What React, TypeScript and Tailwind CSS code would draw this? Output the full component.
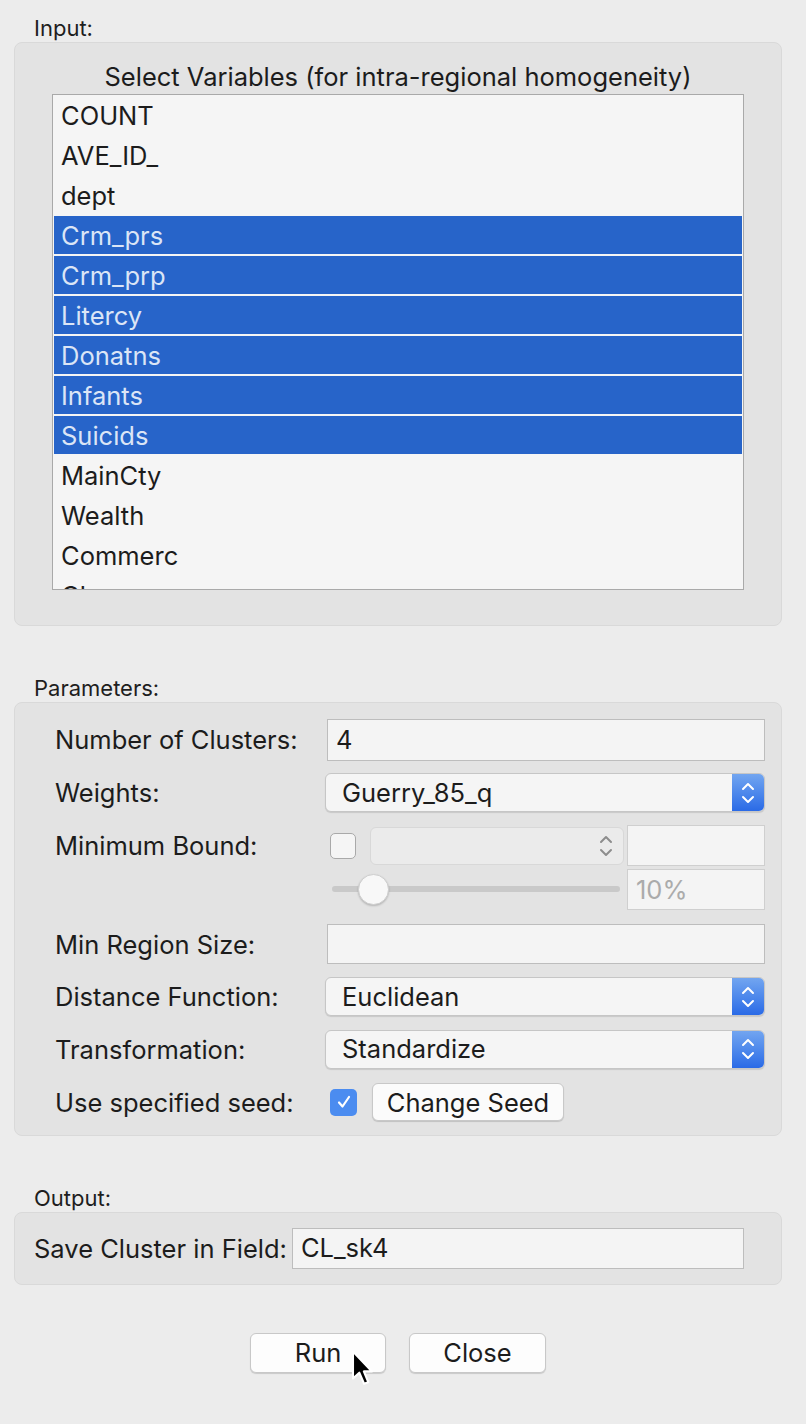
import type { ReactNode } from "react";

const variables = [
  { name: "COUNT", selected: false },
  { name: "AVE_ID_", selected: false },
  { name: "dept", selected: false },
  { name: "Crm_prs", selected: true },
  { name: "Crm_prp", selected: true },
  { name: "Litercy", selected: true },
  { name: "Donatns", selected: true },
  { name: "Infants", selected: true },
  { name: "Suicids", selected: true },
  { name: "MainCty", selected: false },
  { name: "Wealth", selected: false },
  { name: "Commerc", selected: false },
  { name: "Clergy", selected: false },
];

function SectionLabel({ children }: { children: ReactNode }) {
  return <div className="h-[26px] pl-[20px] text-[22px] leading-[26px] text-[#1e1e1e]">{children}</div>;
}

function Panel({ className, children }: { className?: string; children: ReactNode }) {
  return (
    <div className={`w-[768px] rounded-[8px] border border-[#d9d9d9] bg-[#e3e3e3] ${className ?? ""}`}>
      {children}
    </div>
  );
}

function Chevrons({ color }: { color: string }) {
  return (
    <svg width="14" height="26" viewBox="0 0 14 26" fill="none">
      <path d="M2 9 L7 4 L12 9" stroke={color} strokeWidth="2" strokeLinecap="round" strokeLinejoin="round" />
      <path d="M2 17 L7 22 L12 17" stroke={color} strokeWidth="2" strokeLinecap="round" strokeLinejoin="round" />
    </svg>
  );
}

function Select({ value }: { value: string }) {
  return (
    <div className="flex h-[39px] w-[440px] overflow-hidden rounded-[6px] border border-[#c6c6c6] bg-[#f5f5f5] shadow-[0_1px_1px_rgba(0,0,0,0.12)]">
      <div className="flex flex-1 items-center pl-[16px] text-[25.5px]">{value}</div>
      <div className="flex w-[32px] items-center justify-center bg-gradient-to-b from-[#72a5f0] to-[#2a6ae6]">
        <Chevrons color="#ffffff" />
      </div>
    </div>
  );
}

function TextBox({ value, className, muted }: { value?: string; className?: string; muted?: boolean }) {
  return (
    <div
      className={`flex items-center border border-[#bdbdbd] bg-[#f4f4f4] pl-[8px] text-[25.5px] ${muted ? "border-[#cfcfcf] text-[#ababab]" : ""} ${className ?? ""}`}
    >
      {value}
    </div>
  );
}

function Row({ label, children, className }: { label: string; children: ReactNode; className?: string }) {
  return (
    <div className={`flex items-center ${className ?? ""}`}>
      <div className="w-[270px] shrink-0 pt-[1px] text-[25.5px]">{label}</div>
      {children}
    </div>
  );
}

function Cursor() {
  return (
    <svg className="absolute left-[337px] top-[17px]" width="24" height="38" viewBox="0 0 22 36">
      <path
        d="M1.5 1.5 L1.5 27 L7.5 21.5 L12 32 L16 30.5 L11.8 20.3 L19.5 20.3 Z"
        fill="#000"
        stroke="#fff"
        strokeWidth="2"
        strokeLinejoin="round"
      />
    </svg>
  );
}

export default function App() {
  return (
    <div className="h-[1424px] w-[806px] bg-[#ececec] px-[14px] pt-[15px] font-['Inter',sans-serif] text-[#1c1c1c]">
      <SectionLabel>Input:</SectionLabel>
      <Panel className="mt-[1px] h-[584px] pt-[19px]">
        <div className="h-[30px] text-center text-[25.5px] leading-[30px]">
          Select Variables (for intra-regional homogeneity)
        </div>
        <div className="ml-[37px] mt-[2px] h-[496px] w-[692px] overflow-hidden border border-[#a9a9a9] bg-[#f5f5f5] pt-[1px]">
          {variables.map((v) => (
            <div key={v.name} className="h-[40px] px-[1px]">
              <div
                className={`flex h-[38px] items-center pl-[7px] pt-[3px] text-[25.5px] ${v.selected ? "bg-[#2764c9] text-[#dbe5f6]" : ""}`}
              >
                {v.name}
              </div>
            </div>
          ))}
        </div>
      </Panel>

      <div className="mt-[49px]">
        <SectionLabel>Parameters:</SectionLabel>
      </div>
      <Panel className="mt-[1px] h-[434px] pl-[40px] pt-[16px]">
        <Row label="Number of Clusters:">
          <TextBox value="4" className="ml-[2px] h-[42px] w-[438px]" />
        </Row>
        <Row label="Weights:" className="mt-[12px]">
          <Select value="Guerry_85_q" />
        </Row>
        <Row label="Minimum Bound:" className="mt-[13px]">
          <div className="flex items-center">
            <div className="ml-[5px] h-[26px] w-[26px] rounded-[5px] border border-[#a9a9a9] bg-[#f5f5f5]" />
            <div className="ml-[14px] flex h-[38px] w-[254px] items-center justify-end rounded-[6px] border border-[#d8d8d8] bg-[#ebebeb] pr-[10px]">
              <Chevrons color="#8d8d8d" />
            </div>
            <TextBox className="ml-[3px] h-[41px] w-[138px] border-[#cfcfcf]" />
          </div>
        </Row>
        <div className="mt-[3px] flex items-center pl-[277px]">
          <div className="relative h-[41px] w-[288px]">
            <div className="absolute left-0 right-0 top-[17px] h-[6px] rounded-full bg-[#c9c9c9]" />
            <div className="absolute left-[26px] top-[5px] h-[31px] w-[31px] rounded-full border border-[#cfcfcf] bg-[#f8f8f8] shadow-[0_1px_2px_rgba(0,0,0,0.2)]" />
          </div>
          <TextBox value="10%" muted className="ml-[7px] h-[41px] w-[138px]" />
        </div>
        <Row label="Min Region Size:" className="mt-[14px]">
          <TextBox className="ml-[2px] h-[40px] w-[438px]" />
        </Row>
        <Row label="Distance Function:" className="mt-[13px]">
          <Select value="Euclidean" />
        </Row>
        <Row label="Transformation:" className="mt-[13px]">
          <Select value="Standardize" />
        </Row>
        <Row label="Use specified seed:" className="mt-[14px]">
          <div className="flex items-center">
            <div className="ml-[5px] flex h-[27px] w-[27px] items-center justify-center rounded-[5px] bg-[#4b8cf0]">
              <svg width="16" height="16" viewBox="0 0 16 16" fill="none">
                <path d="M3 8.5 L6.5 12.5 L13 3" stroke="#fff" strokeWidth="2.2" strokeLinecap="round" strokeLinejoin="round" />
              </svg>
            </div>
            <button
              type="button"
              className="ml-[15px] h-[38px] w-[192px] rounded-[6px] border border-[#c8c8c8] bg-[#fbfbfb] text-[25.5px] shadow-[0_1px_1px_rgba(0,0,0,0.15)]"
            >
              Change Seed
            </button>
          </div>
        </Row>
      </Panel>

      <div className="mt-[49px]">
        <SectionLabel>Output:</SectionLabel>
      </div>
      <Panel className="mt-[1px] flex h-[73px] items-center pl-[19px]">
        <div className="pt-[1px] text-[25.5px]">Save Cluster in Field:</div>
        <TextBox value="CL_sk4" className="ml-[5px] h-[41px] w-[452px] pl-[6px]" />
      </Panel>

      <div className="relative mt-[48px] flex gap-[23px] pl-[236px]">
        <button
          type="button"
          className="h-[40px] w-[136px] rounded-[6px] border border-[#c8c8c8] bg-[#fdfdfd] text-[25.5px] shadow-[0_1px_1px_rgba(0,0,0,0.15)]"
        >
          Run
        </button>
        <button
          type="button"
          className="h-[40px] w-[137px] rounded-[6px] border border-[#c8c8c8] bg-[#fdfdfd] text-[25.5px] shadow-[0_1px_1px_rgba(0,0,0,0.15)]"
        >
          Close
        </button>
        <Cursor />
      </div>
    </div>
  );
}
